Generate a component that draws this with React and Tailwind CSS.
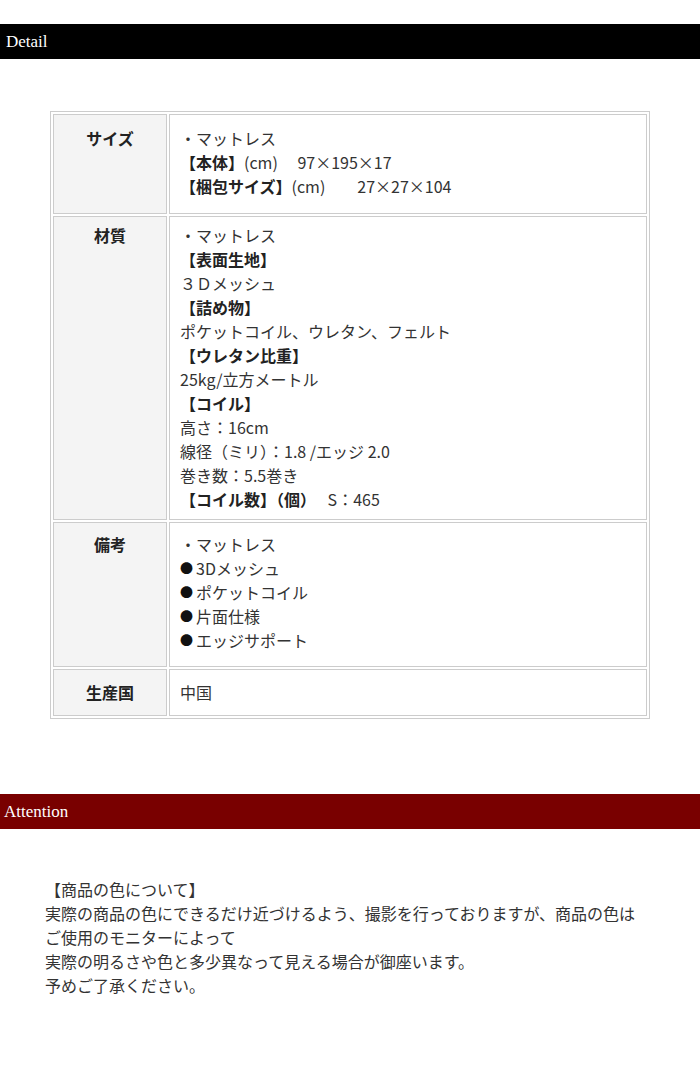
export default function App() {
  const jp = { fontFamily: '"Noto Sans CJK JP", "Noto Sans", sans-serif' };
  const serif = { fontFamily: '"Liberation Serif", "DejaVu Serif", serif' };
  const th =
    "w-[114px] border border-[#cccccc] bg-[#f4f4f4] text-center align-top font-bold text-[#222222] px-[10px]";
  const td = "border border-[#cccccc] bg-white align-top text-left text-[#333333] px-[10px]";
  const dot = (
    <span className="inline-block w-[16px] h-[24px] text-[13px] leading-[24px] align-top text-[#111111]">●</span>
  );
  return (
    <div className="w-[700px] bg-white pt-[24px] pb-[60px]" style={jp}>
      <div
        className="h-[35px] bg-black text-white flex items-center pl-[6px] text-[17px]"
        style={serif}
      >
        Detail
      </div>

      <div className="pt-[52px] pl-[50px]">
        <table className="w-[600px] border border-[#cccccc] border-separate border-spacing-[2px] text-[16px] leading-[24px] table-fixed">
          <colgroup>
            <col className="w-[114px]" />
            <col />
          </colgroup>
          <tbody>
            <tr>
              <th className={th + " pt-[11px] pb-[15px]"}>サイズ</th>
              <td className={td + " pt-[11px] pb-[15px]"}>
                <div>・マットレス</div>
                <div>
                  <b className="text-[#222222]">【本体】</b>(cm)　 97×195×17
                </div>
                <div>
                  <b className="text-[#222222]">【梱包サイズ】</b>(cm)　　27×27×104
                </div>
              </td>
            </tr>
            <tr>
              <th className={th + " pt-[6px] pb-[8px]"}>材質</th>
              <td className={td + " pt-[6px] pb-[8px]"}>
                <div>・マットレス</div>
                <div>
                  <b className="text-[#222222]">【表面生地】</b>
                </div>
                <div>３Ｄメッシュ</div>
                <div>
                  <b className="text-[#222222]">【詰め物】</b>
                </div>
                <div>ポケットコイル、ウレタン、フェルト</div>
                <div>
                  <b className="text-[#222222]">【ウレタン比重】</b>
                </div>
                <div>25kg/立方メートル</div>
                <div>
                  <b className="text-[#222222]">【コイル】</b>
                </div>
                <div>高さ：16cm</div>
                <div>線径（ミリ）：1.8 /エッジ 2.0</div>
                <div>巻き数：5.5巻き</div>
                <div>
                  <b className="text-[#222222]">【コイル数】（個）</b>　 S：465
                </div>
              </td>
            </tr>
            <tr>
              <th className={th + " pt-[9px] pb-[14px]"}>備考</th>
              <td className={td + " pt-[9px] pb-[14px]"}>
                <div>・マットレス</div>
                <div className="h-[24px]">{dot}3Dメッシュ</div>
                <div className="h-[24px]">{dot}ポケットコイル</div>
                <div className="h-[24px]">{dot}片面仕様</div>
                <div className="h-[24px]">{dot}エッジサポート</div>
              </td>
            </tr>
            <tr>
              <th className={th + " pt-[10px] pb-[11px]"}>生産国</th>
              <td className={td + " pt-[10px] pb-[11px]"}>中国</td>
            </tr>
          </tbody>
        </table>
      </div>

      <div
        className="mt-[75px] h-[35px] bg-[#790000] text-white flex items-center pl-[4px] text-[17px]"
        style={serif}
      >
        Attention
      </div>

      <div className="pt-[48px] pl-[45px] text-[16px] leading-[24px] text-[#333333]">
        <div>【商品の色について】</div>
        <div>実際の商品の色にできるだけ近づけるよう、撮影を行っておりますが、商品の色は</div>
        <div>ご使用のモニターによって</div>
        <div>実際の明るさや色と多少異なって見える場合が御座います。</div>
        <div>予めご了承ください。</div>
      </div>
    </div>
  );
}
